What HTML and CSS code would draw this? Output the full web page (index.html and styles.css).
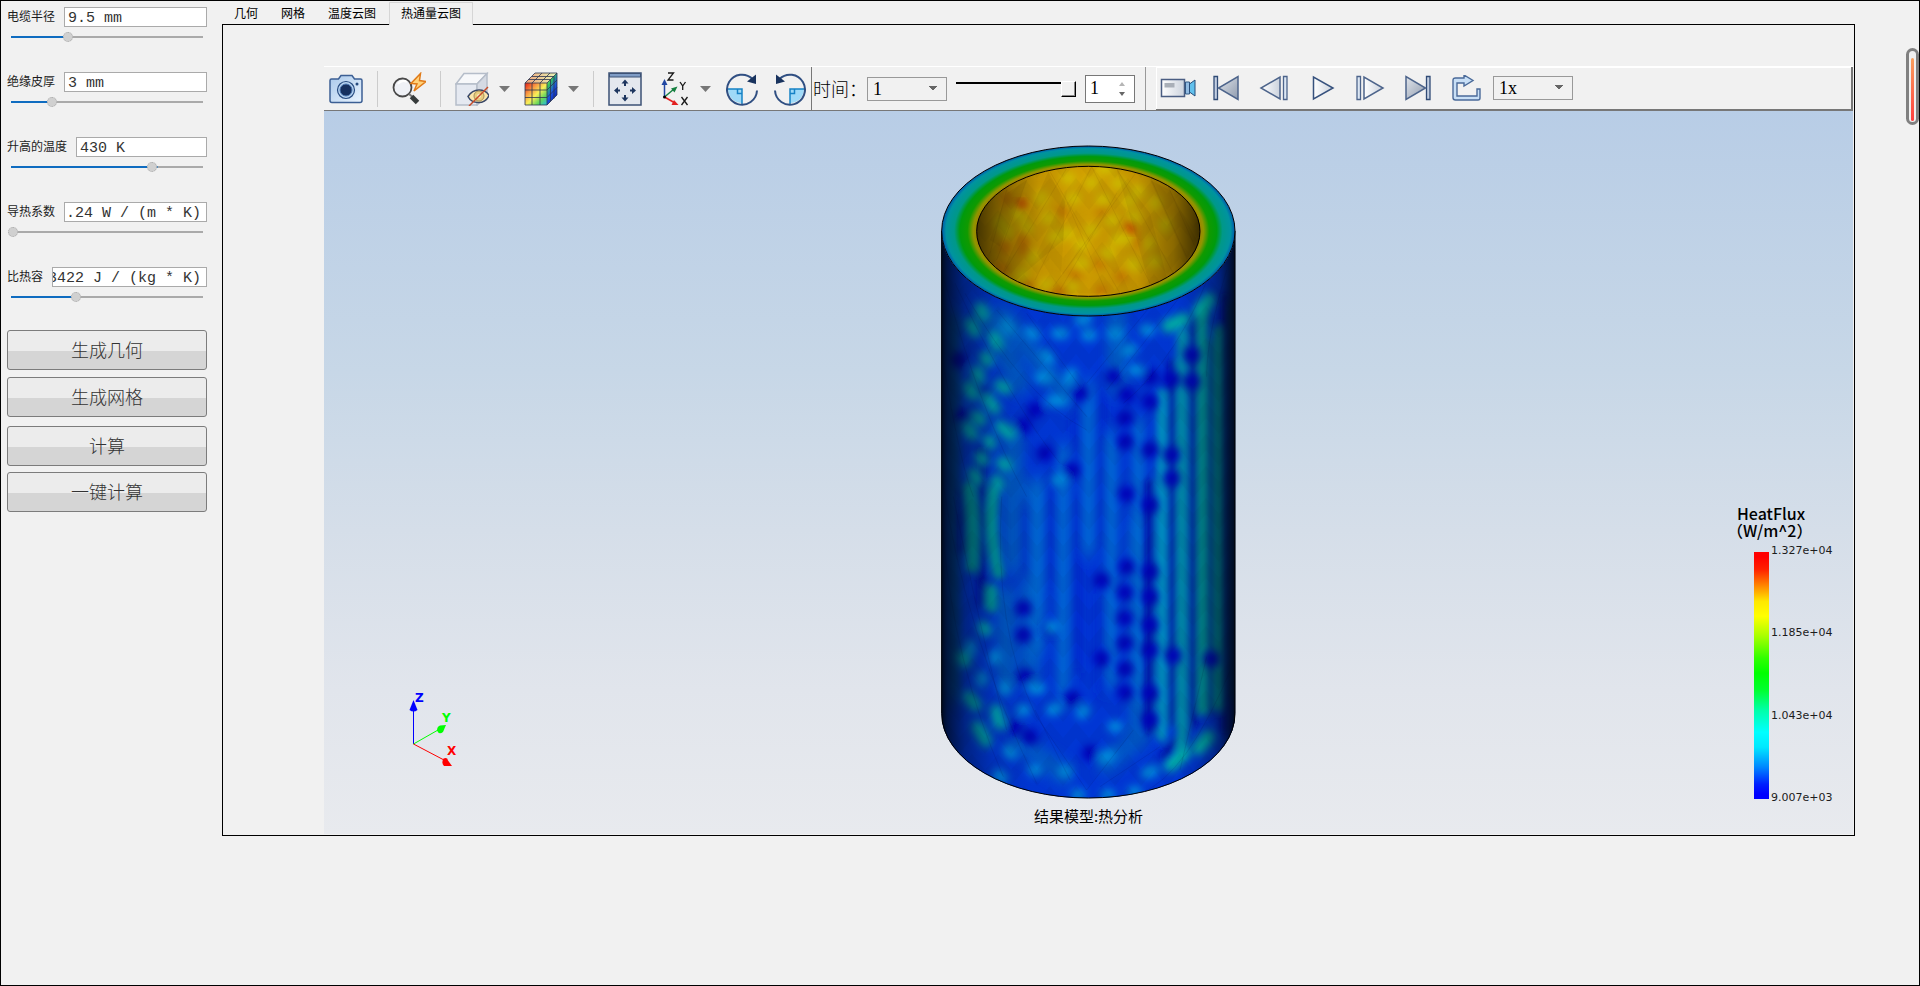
FILE: index.html
```html
<!DOCTYPE html>
<html lang="zh-CN">
<head>
<meta charset="utf-8">
<title>热通量云图</title>
<link rel="stylesheet" href="styles.css">
</head>
<body>
<div class="app">
  <aside class="sidebar">
    <form class="params">
      <div class="param">
        <div class="param-row"><label for="radius">电缆半径</label><input class="field" id="radius" type="text" value="9.5 mm"></div>
        <input class="slider" type="range" aria-label="电缆半径" min="0" max="100" step="0.5" value="29.5" style="--fill:29.5%">
      </div>
      <div class="param">
        <div class="param-row"><label for="skin">绝缘皮厚</label><input class="field" id="skin" type="text" value="3 mm"></div>
        <input class="slider" type="range" aria-label="绝缘皮厚" min="0" max="100" step="0.5" value="20.5" style="--fill:20.5%">
      </div>
      <div class="param">
        <div class="param-row"><label for="temp">升高的温度</label><input class="field" id="temp" type="text" value="430 K"></div>
        <input class="slider" type="range" aria-label="升高的温度" min="0" max="100" step="0.5" value="74" style="--fill:74%">
      </div>
      <div class="param">
        <div class="param-row"><label for="conduct">导热系数</label><input class="field field-flush" id="conduct" type="text" value=".24 W / (m * K)"></div>
        <input class="slider" type="range" aria-label="导热系数" min="0" max="100" step="0.5" value="0" style="--fill:0%">
      </div>
      <div class="param">
        <div class="param-row"><label for="heatcap">比热容</label><input class="field field-scrolled" id="heatcap" type="text" value="3422 J / (kg * K)"></div>
        <input class="slider" type="range" aria-label="比热容" min="0" max="100" step="0.5" value="33.5" style="--fill:33.5%">
      </div>
    </form>
    <div class="actions">
      <button class="action" type="button">生成几何</button>
      <button class="action" type="button">生成网格</button>
      <button class="action action-spaced" type="button">计算</button>
      <button class="action" type="button">一键计算</button>
    </div>
  </aside>

  <main class="main">
    <nav class="tabs" role="tablist">
      <button class="tab" type="button" role="tab">几何</button>
      <button class="tab" type="button" role="tab">网格</button>
      <button class="tab" type="button" role="tab">温度云图</button>
      <button class="tab tab-active" type="button" role="tab" aria-selected="true">热通量云图</button>
    </nav>
    <section class="panel">
      <div class="toolbar">
        <div class="tools">
          <button class="tool" type="button" aria-label="截图">
            <svg viewBox="0 0 34 34"><defs><linearGradient id="cam" x1="0" y1="0" x2="1" y2="1"><stop offset="0" stop-color="#a9c8ea"/><stop offset="1" stop-color="#eaf4ff"/></linearGradient></defs><path d="M2.500 7h7l2.500-3.500h11L25.500 7h6q1.500 0 1.500 1.500v20q0 2-2 2H3q-2 0-2-2v-20Q1 7 2.500 7Z" fill="url(#cam)" stroke="#3c5f94" stroke-width="1.500"/><circle cx="17" cy="18" r="8.500" fill="#b8d4f2" stroke="#274b80" stroke-width="1.200"/><circle cx="17" cy="18" r="6" fill="#16305f" stroke="#4a76b0" stroke-width="1"/><circle cx="28" cy="12" r="1.500" fill="#274b80"/></svg>
          </button>
          <span class="sep"></span>
          <button class="tool" type="button" aria-label="快速查看">
            <svg viewBox="0 0 34 34"><circle cx="10.500" cy="15.500" r="9" fill="#eff1f6" stroke="#484848" stroke-width="1.800"/><path d="M6 12q4-5 9-2" fill="none" stroke="#fff" stroke-width="2"/><path d="M17 22l3 2.500" stroke="#777" stroke-width="2"/><path d="M19.500 24.500l6 6" stroke="#363b3b" stroke-width="5"/><path d="M28.500 1.500 19 11.500l6 .5-3 7L34 9.500l-6.500-1Z" fill="#ffd27a" stroke="#e07a18" stroke-width="1.500"/></svg>
          </button>
          <span class="sep"></span>
          <button class="tool" type="button" aria-label="隐藏实体">
            <svg viewBox="0 0 34 34"><path d="M1 12 9 1.500h23L22 12Z" fill="#f7f8fa" stroke="#b5bdc9" stroke-width="1.500"/><path d="M1 12h21v21H1Z" fill="#e5e9f1" stroke="#b5bdc9" stroke-width="1.500"/><path d="M22 12 32 1.500v23L22 33Z" fill="#d5dae3" stroke="#b5bdc9" stroke-width="1.500"/><path d="M13 24.500q4-6.500 11-6.500t10 5.500q-3 7-10.500 7T13 24.500Z" fill="#fae6ab" stroke="#394767" stroke-width="1.500"/><circle cx="24" cy="24" r="5" fill="#e9ce7f" stroke="#a79058"/><circle cx="24" cy="24" r="2" fill="#f7edcb"/><path d="M14 34 33 15" stroke="#c54b29" stroke-width="1.500"/></svg>
          </button>
          <button class="drop" type="button" aria-label="隐藏选项"><svg viewBox="0 0 11 6"><path d="M0 0h11L5.500 6Z" fill="#777"/></svg></button>
          <button class="tool" type="button" aria-label="云图显示">
            <svg viewBox="0 0 34 34"><defs><linearGradient id="cf" x1="0" y1="0" x2="1" y2="1"><stop offset=".05" stop-color="#e8321c"/><stop offset=".3" stop-color="#f99b45"/><stop offset=".52" stop-color="#f8ef58"/><stop offset=".76" stop-color="#62d65c"/><stop offset="1" stop-color="#20b8e8"/></linearGradient><linearGradient id="cs" x1="0" y1="0" x2=".6" y2="1"><stop offset="0" stop-color="#f7ef70"/><stop offset=".35" stop-color="#34c35c"/><stop offset=".65" stop-color="#1d55e3"/><stop offset="1" stop-color="#0a1fae"/></linearGradient><linearGradient id="ct"><stop offset="0" stop-color="#efa27a"/><stop offset="1" stop-color="#e8f6b5"/></linearGradient></defs><path d="M1 11 11 1h22L23 11Z" fill="url(#ct)"/><path d="M1 11h22v22H1Z" fill="url(#cf)"/><path d="M23 11 33 1v22L23 33Z" fill="url(#cs)"/><path d="M1 11 11 1h22v22L23 33H1ZM1 11h22v22M23 11 33 1M8 11v22M16 11v22M1 18h22l10-10M1 25.500h22l10-10M8 11 18 1M16 11 26 1M4.500 7.500h22v22M8 4.500h22v22" fill="none" stroke="#2b3550" stroke-width=".8"/></svg>
          </button>
          <button class="drop" type="button" aria-label="云图选项"><svg viewBox="0 0 11 6"><path d="M0 0h11L5.500 6Z" fill="#777"/></svg></button>
          <span class="sep"></span>
          <button class="tool" type="button" aria-label="适应窗口">
            <svg viewBox="0 0 34 34"><path d="M1 1h32v32H1Z" fill="#e4e8ee" stroke="#3d5275" stroke-width="1.500"/><path d="M1.500 1.500h31V5h-31Z" fill="#7f9cc5" stroke="#3d5275"/><path d="M17 14V9.500M17 23v4M12 18.500H8M22 18.500h4" stroke="#1c355e" stroke-width="2"/><path d="M13.500 11.500 17 7.500l3.500 4ZM13.500 25.500l3.500 4 3.500-4ZM10 15l-4 3.500L10 22ZM24 15l4 3.500-4 3.500Z" fill="#1c355e"/></svg>
          </button>
          <button class="tool" type="button" aria-label="视角">
            <svg viewBox="0 0 34 34"><path d="M8.500 25V10" stroke="#2147a3" stroke-width="1.500"/><path d="M8.500 25 18 17" stroke="#178040" stroke-width="1.500"/><path d="M8.500 25 19 31" stroke="#e32020" stroke-width="1.500"/><path d="M5.500 13 8.500 7l3 6Z" fill="#2147a3"/><path d="M15 16.500l6.500-2-3 6Z" fill="#178040"/><path d="M18 28l4.500 5h-7Z" fill="#e32020"/><circle cx="8.500" cy="25" r="1.500"/><path d="M12 1h5.500L12 8h5.500M24 10l2.700 4v4M29.500 10l-2.800 4M25.500 25l6 8M31.500 25l-6 8" fill="none" stroke="#181818" stroke-width="1.300"/></svg>
          </button>
          <button class="drop" type="button" aria-label="视角选项"><svg viewBox="0 0 11 6"><path d="M0 0h11L5.500 6Z" fill="#777"/></svg></button>
          <button class="tool" type="button" aria-label="顺时针旋转">
            <svg viewBox="0 0 34 34"><path d="M3 17h14v14A14 14 0 0 1 3 17Z" fill="#9fdaf8"/><path d="M2 17h15v15M17 21.500h-4.500V17" fill="none" stroke="#1682c5" stroke-width="1.500"/><path d="M32 18.500A15 15 0 1 1 27.500 7" fill="none" stroke="#304f82" stroke-width="2"/><path d="M22 9.500 31 12V2.500Z" fill="#19335e"/></svg>
          </button>
          <button class="tool" type="button" aria-label="逆时针旋转">
            <svg viewBox="0 0 34 34"><path d="M31 17H17v14A14 14 0 0 0 31 17Z" fill="#9fdaf8"/><path d="M32 17H17v15M17 21.500h4.500V17" fill="none" stroke="#1682c5" stroke-width="1.500"/><path d="M2 18.500A15 15 0 1 0 6.500 7" fill="none" stroke="#304f82" stroke-width="2"/><path d="M12 9.500 3 12V2.500Z" fill="#19335e"/></svg>
          </button>
        </div>
        <div class="timing">
          <label class="time-label" for="time">时间：</label>
          <select class="combo" id="time"><option>1</option></select>
          <input class="time-slider" type="range" aria-label="时间步" min="0" max="1" value="1">
          <div class="spin">
            <input type="text" aria-label="步数" value="1">
            <div class="spin-buttons">
              <button type="button" aria-label="增加"><svg viewBox="0 0 6 4"><path d="M0 4h6L3 0Z" fill="#b5b5b5"/></svg></button>
              <button type="button" aria-label="减少"><svg viewBox="0 0 6 4"><path d="M0 0h6L3 4Z" fill="#666"/></svg></button>
            </div>
          </div>
        </div>
        <div class="playback">
          <svg class="defs" aria-hidden="true"><defs><linearGradient id="pale"><stop offset="0" stop-color="#fff"/><stop offset="1" stop-color="#cbd2dd"/></linearGradient><linearGradient id="steel" x1="0" y1="0" x2="1" y2="1"><stop offset="0" stop-color="#e1e5eb"/><stop offset="1" stop-color="#8f9bae"/></linearGradient></defs></svg>
          <button class="play" type="button" aria-label="录制"><svg viewBox="0 0 36 26"><path d="M1.500 4.500h23v17h-23Z" fill="url(#pale)" stroke="#4a5d82" stroke-width="1.500"/><path d="M4.500 8h10v4.500h-10Z" fill="#a9afb8"/><path d="M25.500 7h4v12h-4Z" fill="#92bbe1" stroke="#315884"/><path d="M29.500 9 35 5v16l-5.500-4Z" fill="#62c1ed" stroke="#274c79"/></svg></button>
          <button class="play" type="button" aria-label="首帧"><svg viewBox="0 0 36 26"><path d="M6 1.500h3.500v23H6Z" fill="#c3cfe2" stroke="#304b76" stroke-width="1.300"/><path d="M30 1.500v23L10.500 13Z" fill="url(#steel)" stroke="#4d648b" stroke-width="1.500"/></svg></button>
          <button class="play" type="button" aria-label="上一帧"><svg viewBox="0 0 36 26"><path d="M24 2v22L5 13Z" fill="url(#pale)" stroke="#4d648b" stroke-width="1.500"/><path d="M27.500 1.500H31v23h-3.500Z" fill="#dce7f4" stroke="#4d648b" stroke-width="1.300"/></svg></button>
          <button class="play" type="button" aria-label="播放"><svg viewBox="0 0 36 26"><path d="M9.500 2v22L29 13Z" fill="url(#pale)" stroke="#36517d" stroke-width="1.500"/></svg></button>
          <button class="play" type="button" aria-label="下一帧"><svg viewBox="0 0 36 26"><path d="M12 2v22l19-11Z" fill="url(#pale)" stroke="#4d648b" stroke-width="1.500"/><path d="M5 1.500h3.500v23H5Z" fill="#dce7f4" stroke="#4d648b" stroke-width="1.300"/></svg></button>
          <button class="play" type="button" aria-label="末帧"><svg viewBox="0 0 36 26"><path d="M26.500 1.500H30v23h-3.500Z" fill="#c3cfe2" stroke="#304b76" stroke-width="1.300"/><path d="M6 1.500v23L25.500 13Z" fill="url(#steel)" stroke="#4d648b" stroke-width="1.500"/></svg></button>
          <button class="play" type="button" aria-label="循环"><svg viewBox="0 0 36 26"><path d="M16 3V0l9 5.500-9 5.500V8H9v13h20v-7h3v9q0 2-2 2H7.500Q5 25 5 22.500V5.500Q5 3 7.500 3Z" fill="#c8dff6" stroke="#4a6a99" stroke-width="1.400"/></svg></button>
          <select class="combo combo-speed" aria-label="播放速度"><option>1x</option></select>
        </div>
      </div>

      <div class="scene">
        <svg class="model" viewBox="60 45 891 1965" role="img" aria-label="热通量模型">
          <defs>
            <radialGradient id="ring"><stop offset=".75" stop-color="#a87f00"/><stop offset=".785" stop-color="#8f9500"/><stop offset=".825" stop-color="#109a00"/><stop offset=".875" stop-color="#009a0c"/><stop offset=".915" stop-color="#009888"/><stop offset=".97" stop-color="#0093a0"/><stop offset="1" stop-color="#0057ae"/></radialGradient>
            <linearGradient id="shade"><stop offset="0" stop-color="#000814" stop-opacity=".95"/><stop offset=".02" stop-color="#000814" stop-opacity=".75"/><stop offset=".08" stop-color="#000814" stop-opacity=".42"/><stop offset=".18" stop-color="#000814" stop-opacity=".13"/><stop offset=".3" stop-color="#000814" stop-opacity=".02"/><stop offset=".5" stop-opacity="0"/><stop offset=".8" stop-color="#000814" stop-opacity=".02"/><stop offset=".88" stop-color="#000814" stop-opacity=".17"/><stop offset=".95" stop-color="#000814" stop-opacity=".48"/><stop offset="1" stop-color="#000814" stop-opacity=".95"/></linearGradient>
            <linearGradient id="boreShade"><stop offset="0" stop-opacity=".66"/><stop offset=".12" stop-opacity=".36"/><stop offset=".28" stop-opacity=".08"/><stop offset=".5" stop-opacity="0"/><stop offset=".72" stop-opacity=".08"/><stop offset=".88" stop-opacity=".34"/><stop offset="1" stop-opacity=".7"/></linearGradient>
            <filter id="soft" x="-20%" y="-20%" width="140%" height="140%"><feGaussianBlur stdDeviation="11"/></filter>
            <filter id="dabs" x="-20%" y="-20%" width="140%" height="140%"><feGaussianBlur stdDeviation="13"/></filter>
            <filter id="softer" x="-20%" y="-20%" width="140%" height="140%"><feGaussianBlur stdDeviation="14 22"/></filter>
            <pattern id="facets" width="78" height="96" patternUnits="userSpaceOnUse"><path d="M0 0h78L39 48ZM0 48l39 48H0ZM78 48 39 96h39Z" opacity=".03"/></pattern>
            <clipPath id="wall"><path d="M64 303A441 255 0 0 0 946 303V1750A441 255 0 0 1 64 1750Z"/></clipPath>
            <clipPath id="bore"><ellipse cx="505" cy="304" rx="336" ry="195"/></clipPath>
          </defs>
          <g clip-path="url(#wall)">
            <path d="M60 300h890v1710H60Z" fill="#0036d4"/>
            <g filter="url(#softer)" fill="none" stroke-linecap="round">
              <path d="M250 560 440 800M330 1080V1640M280 920V1300M590 560V760M655 1180V1800M660 1820 560 1900M300 1840l130 90M260 1400V1650M200 560 300 760" stroke="#0058c6" stroke-width="60"/>
              <path d="M505 770V1260M430 960V1700M355 1060V1560M575 920V1660M655 880V1700" stroke="#006ad4" stroke-width="34"/>
              <path d="M470 800V980M392 1040V1380M470 1100V1620M545 780V1250M315 1120V1340M545 1400V1680" stroke="#0020cc" stroke-width="22"/>
              <path d="M100 560V1700" stroke="#0050a0" stroke-width="34"/>
            </g>
            <g filter="url(#soft)" fill="none" stroke-linecap="round">
              <path d="M690 1060V1800M757 700V1130M820 560V1780M870 640V1750M757 1130V1780M915 500V1800M185 960V1420M130 1080V1260M800 1800 730 1880" stroke="#0010a8" stroke-width="26"/>
              <path d="M725 790V1820" stroke="#0098c0" stroke-width="30"/>
              <path d="M787 610V1860" stroke="#0092ac" stroke-width="32"/>
              <path d="M848 540V1740" stroke="#009c98" stroke-width="31"/>
              <path d="M894 600V1730" stroke="#009890" stroke-width="24"/>
              <path d="M935 520V1700" stroke="#004a6a" stroke-width="12"/>
              <path d="M222 1080Q205 1200 235 1330M148 1070Q165 1180 155 1310M215 1380V1430" stroke="#009a9b" stroke-width="36"/>
            </g>
            <g filter="url(#dabs)" fill="none" stroke-linecap="round">
              <path d="M345 840v.1M310 888v.1M375 970v.1M455 1020v.1M480 790v.1M580 740v.1M620 795v.1M690 740v.1M755 748v.1M815 675v.1M815 755v.1M690 815v.1M615 865v.1M615 935v.1M690 960v.1M755 975v.1M755 1045v.1M620 1092v.1M690 1125v.1M620 1310v.1M545 1352v.1M690 1325v.1M615 1388v.1M690 1400v.1M615 1465v.1M690 1485v.1M615 1540v.1M690 1560v.1M545 1585v.1M760 1577v.1M875 1587v.1M615 1617v.1M615 1687v.1M690 1690v.1M690 1770v.1M310 1435v.1M390 1495v.1M310 1515v.1M455 1705v.1M315 1640v.1M115 690v.1M130 860v.1M190 790v.1M330 1820v.1M510 1870v.1M280 1790v.1" stroke="#0004b8" stroke-width="50"/>
              <path d="M255 580l14 20M330 605l14 10M410 610h20M500 615h14M580 610h12M675 600h14M620 665l16 -8M640 720h14M455 730l-10 24M360 742h20M395 812h30M375 675l12 14M470 1995h8M560 1995h8M640 1985h8M340 1920h10M430 1925h10M550 1885l20 -10M680 1930l20-8M235 1935l12 10M265 1860l10 12M340 1675h20M255 1668v12M225 1575v14M150 1545v20M185 1640v14M305 1740h10M395 1740l15-5M485 1750l8-10M410 1050h12M480 570l20 -4M395 1490h6M580 1790h12" stroke="#008fdc" stroke-width="34"/>
              <path d="M180 535l10 20M150 580l14 26M222 620l10 24M195 680l10 14M170 725l8 18M145 770l12 24M240 765l18 12M203 808l22 28M172 858l10 14M143 895l14 20M240 888l30 24M205 930l8 12M245 998l14 8M180 980l10 12M160 1030l12 20M228 1050l8 14M190 1490l8 12M145 1700l22 26M228 1740l10 42M172 1790l26 44M125 1580l10 16" stroke="#00b0aa" stroke-width="35"/>
              <path d="M745 588l48-20M840 542l28-34M752 1905l38-32M835 1855l30-34" stroke="#00b6aa" stroke-width="40"/>
            </g>
            <g fill="none" stroke="#000a40" stroke-opacity=".17" stroke-width="2">
              <path d="M70 440Q180 850 320 1100M105 460Q280 830 420 1000M135 490Q310 800 500 900M70 700Q120 1000 160 1100M230 540 500 860M320 550 480 770M68 1050Q130 1500 350 1960M68 1200Q100 1600 250 1940M100 1100Q180 1500 260 1800M245 1100Q220 1500 350 1760L500 1980M345 1740 450 1950M880 400Q780 680 610 820M780 500 560 780M920 420Q860 620 860 740M690 530 500 760M940 1600Q800 1940 660 1990M860 1580 780 1920M720 1850 540 1970M640 1800 500 1980"/>
            </g>
            <path d="M60 300h890v1710H60Z" fill="url(#facets)"/>
            <path d="M64 300h882v1710H64Z" fill="url(#shade)"/>
          </g>
          <path d="M65 303V1750A440 254 0 0 0 945 1750V303" fill="none" stroke="#000" stroke-width="3"/>
          <ellipse cx="505" cy="303" rx="440" ry="255" fill="url(#ring)" stroke="#000" stroke-width="3"/>
          <g clip-path="url(#bore)">
            <path d="M160 100h700v410H160Z" fill="#d29f00"/>
            <g filter="url(#dabs)" stroke-linecap="round" fill="none">
              <path d="M440 145h10M510 158h8M590 160h10M545 115h20M650 180l8 4M290 250l10 6M320 290v6M380 265h8M455 205h10M545 210h10M620 215h10M440 310h8M510 300h8M590 330l30-6M400 320h10M330 385l10-8M300 440l10-8M480 345h10M560 370h10M635 400l10 8M705 215v8M735 280v10M700 395h8M365 200v10M260 300v10M240 275v8M375 465h10M480 400h8M450 470h6M680 340h8M570 270h10M640 260h8" stroke="#d6c400" stroke-width="36"/>
              <path d="M305 215v8M308 320l4 50M255 340v20M240 410l12 8M320 465h8M260 200v14M400 485l30-4M600 440h10M535 400h8M460 435h12M545 245h8M420 245h8M655 330v10M540 480h10" stroke="#cc7400" stroke-width="28"/>
            </g>
            <path d="M625 288l12 14M302 218l6 6" stroke="#cf4600" stroke-width="20" stroke-linecap="round" filter="url(#soft)"/>
            <g fill="#000">
              <path d="M320 150 240 350 210 330 260 190ZM385 125 245 430 290 450 430 330 435 215ZM590 118 690 470 740 440 690 250ZM690 150 800 390 830 330 750 180Z" opacity=".05"/>
              <path d="M515 108 430 240 480 350 390 490h240L570 350 620 240ZM440 180 350 370 420 480Z" opacity=".03"/>
              <path d="M160 100h700v410H160Z" fill="url(#facets)"/>
            </g>
            <path d="M515 110 345 450M440 115 250 430M515 110 690 460M590 115 760 430M320 150 230 390M690 140 800 380M440 215 560 490M590 190 420 480M260 180 210 370M745 170 825 350M390 125 600 490M650 125 400 470" fill="none" stroke="#553a00" stroke-opacity=".14" stroke-width="2"/>
            <path d="M169 100h672v410H169Z" fill="url(#boreShade)"/>
          </g>
          <ellipse cx="505" cy="304" rx="335" ry="195" fill="none" stroke="#000" stroke-width="3"/>
        </svg>
        <p class="caption">结果模型:热分析</p>

        <svg class="triad" viewBox="0 0 50 80" role="img" aria-label="坐标轴">
          <path d="M5.500 52V14" stroke="#00f"/><path d="M5.500 52 30 38" stroke="#0f0"/><path d="M5.500 52 36 68" stroke="#f00"/>
          <path d="M5.500 8 9.500 18q-4 3-8 0Z" fill="#00f"/><path d="M38 33l-3 7q-4 3-6-1.500 0-4 3-5Z" fill="#0f0"/><path d="M44 74h-8q-3-3-.5-7.500 4-1.500 4.500 2Z" fill="#f00"/>
          <text x="7" y="10" fill="#00f">Z</text><text x="34" y="30" fill="#0f0">Y</text><text x="39" y="63" fill="#f00">X</text>
        </svg>

        <div class="legend">
          <div class="legend-title"><div>HeatFlux</div><div class="legend-unit">（W/m^2）</div></div>
          <div class="legend-body">
            <div class="legend-bar"></div>
            <ol class="legend-ticks"><li>1.327e+04</li><li>1.185e+04</li><li>1.043e+04</li><li>9.007e+03</li></ol>
          </div>
        </div>
      </div>
    </section>
  </main>
  <div class="gauge"><div class="gauge-fill"></div></div>
</div>
</body>
</html>
```
FILE: styles.css
```css
* { box-sizing: border-box; }

body {
  margin: 0;
  background: #f1f1f1;
  color: #000;
  font: 12px "Liberation Sans", "Noto Sans CJK SC", sans-serif;
}

button { margin: 0; padding: 0; border: 0; background: none; font: inherit; color: inherit; }
svg { display: block; }

.app {
  position: relative;
  display: flex;
  min-height: 100vh;
  border: 1px solid #000;
  background: #f1f1f1;
}

/* parameters */
.sidebar { flex: none; width: 206px; padding: 6px 0 0 6px; }
.param { height: 65px; }
.param-row { display: flex; align-items: center; gap: 9px; height: 20px; }
.param-row label { white-space: nowrap; line-height: 20px; color: #1c1c1c; }

.field {
  flex: 1;
  min-width: 0;
  height: 20px;
  padding: 2px 3px 0;
  border: 1px solid #aaa;
  background: #fff;
  color: #333;
  font: 15px "Liberation Mono", monospace;
}
.field-flush { padding: 2px 1px 0; }
.field-scrolled { padding: 2px 0 0; text-indent: -5px; }

.slider {
  display: block;
  appearance: none;
  width: 198px;
  height: 10px;
  margin: 5px 0 0 1px;
  background:
    linear-gradient(#0f6cc0, #0f6cc0) 3px 50% / var(--fill) 2px no-repeat,
    linear-gradient(#aaa, #aaa) 3px 50% / 192px 2px no-repeat;
}
.slider::-webkit-slider-thumb {
  appearance: none;
  width: 10px;
  height: 10px;
  border: 1px dotted #aaa;
  border-radius: 50%;
  background: #d0d0d0;
}

.actions { display: flex; flex-direction: column; gap: 7px; margin-top: -2px; }
.action {
  height: 40px;
  padding-bottom: 3px;
  border: 1px solid #7c7c7c;
  border-radius: 3px;
  background: linear-gradient(#ececec 0 52%, #d5d5d5 52%);
  color: #333;
  font: 300 18px "Noto Sans CJK SC", sans-serif;
}
.action-spaced { margin-top: 2px; }
.action-spaced + .action { margin-top: -1px; }

/* tabs */
.main { flex: 1; min-width: 0; margin: 0 64px 0 15px; }
.tabs { display: flex; height: 23px; padding-top: 1px; }
.tab { height: 22px; padding: 1px 11px 0 12px; line-height: 22px; }
.tab-active {
  height: 23px;
  margin-left: 2px;
  padding: 0 11px;
  border: 1px solid #d6d6d6;
  border-bottom: 0;
  background: #f1f1f1;
  z-index: 1;
}

.panel { padding: 41px 1px 1px 101px; border: 1px solid #000; }

/* toolbar */
.toolbar {
  display: flex;
  height: 45px;
  border-top: 1px solid #fff;
  border-bottom: 1px solid #777;
}
.tools { display: flex; align-items: center; gap: 14px; padding: 0 4px 0 5px; }
.tool svg { width: 34px; height: 34px; }
.sep { width: 1px; height: 36px; background: #ccc; }
.drop { margin-left: -4px; }
.drop svg { width: 11px; height: 6px; }

.timing {
  display: flex;
  align-items: center;
  padding: 0 10px 0 1px;
  border-left: 1px solid #777;
  border-right: 1px solid #999;
}
.time-label {
  width: 54px;
  padding-bottom: 2px;
  font: 300 18px "Noto Sans CJK SC", sans-serif;
  white-space: nowrap;
}

.combo {
  appearance: none;
  width: 80px;
  height: 24px;
  padding: 0 5px;
  border: 1px solid #999;
  border-radius: 0;
  background:
    linear-gradient(to bottom right, #666 50%, transparent 50%) 65px 8px / 4px 5px no-repeat,
    linear-gradient(to bottom left, #666 50%, transparent 50%) 61px 8px / 4px 5px no-repeat,
    #f1f1f1;
  color: #000;
  font: 18px/22px "Liberation Serif", serif;
}
.combo-speed { margin-left: -3px; }

.time-slider {
  appearance: none;
  width: 120px;
  height: 16px;
  margin: 0 9px;
  background: linear-gradient(#000, #000) 0 1px / 106px 2px no-repeat;
}
.time-slider::-webkit-slider-thumb {
  appearance: none;
  width: 15px;
  height: 16px;
  border: 1px solid;
  border-color: #fff #000 #000 #fff;
  background: #f1f1f1;
  box-shadow: inset -1px -1px #888;
}

.spin {
  display: flex;
  align-items: center;
  width: 50px;
  height: 28px;
  border: 1px solid #777;
  background: #fff;
}
.spin input {
  width: 33px;
  padding: 0 0 0 4px;
  border: 0;
  background: none;
  font: 18px "Liberation Serif", serif;
}
.spin-buttons { display: flex; flex-direction: column; gap: 6px; }
.spin-buttons svg { width: 6px; height: 4px; }

.playback {
  display: flex;
  flex: 1;
  align-items: center;
  gap: 12px;
  margin-left: 10px;
  padding-left: 4px;
  border: solid #777;
  border-width: 0 2px 1px 0;
  box-shadow: inset 1px 1px #fff;
}
.defs { position: absolute; width: 0; height: 0; }
.play svg { width: 36px; height: 26px; }

/* scene */
.scene {
  position: relative;
  display: flex;
  flex-direction: column;
  align-items: center;
  height: 723px;
  padding-top: 34px;
  background: linear-gradient(#b8cde6, #c7d7e7 36%, #d5dee9 58%, #e1e5ec 80%, #e8eaee);
}
.model { width: 297px; height: 655px; }
.caption { margin: 5px 0 0; font: 15px/22px "Noto Sans CJK SC", sans-serif; }

.triad {
  position: absolute;
  left: 84px;
  bottom: 62px;
  width: 50px;
  height: 80px;
  overflow: visible;
  font: bold 12px "DejaVu Sans", sans-serif;
}

.legend { position: absolute; right: 20px; bottom: 28px; width: 96px; }
.legend-title {
  padding-bottom: 6px;
  font: 500 16px/17px "Noto Sans CJK SC", sans-serif;
  white-space: nowrap;
}
.legend-unit { margin-left: -10px; text-spacing-trim: space-all; }
.legend-body { display: flex; gap: 2px; padding-left: 17px; }
.legend-bar {
  width: 15px;
  height: 247px;
  margin: 7px 0;
  background: linear-gradient(#f00 2%, #ff2000 7%, #ff8c00 14%, #ffe800 20%, #ff0 26%, #a8ff00 34%, #30ff00 43%, #0f0 49%, #00ff30 56%, #00ffa8 64%, #0ff 73%, #00e8ff 79%, #08f 87%, #0020ff 94%, #00f 98%);
}
.legend-ticks {
  display: flex;
  flex-direction: column;
  justify-content: space-between;
  margin: 0;
  padding: 0 0 2px;
  list-style: none;
  color: #1c1c1c;
  font: 11px/12px "DejaVu Sans", sans-serif;
}

/* progress gauge */
.gauge {
  position: absolute;
  top: 47px;
  right: 0;
  width: 13px;
  height: 77px;
  padding: 7px 2px 1px;
  border: 3px solid #808080;
  border-radius: 7px;
  background: #f1f1f1;
}
.gauge-fill { height: 63px; border-radius: 2px; background: linear-gradient(#fa9f5c, #ff3f3f); }
```
